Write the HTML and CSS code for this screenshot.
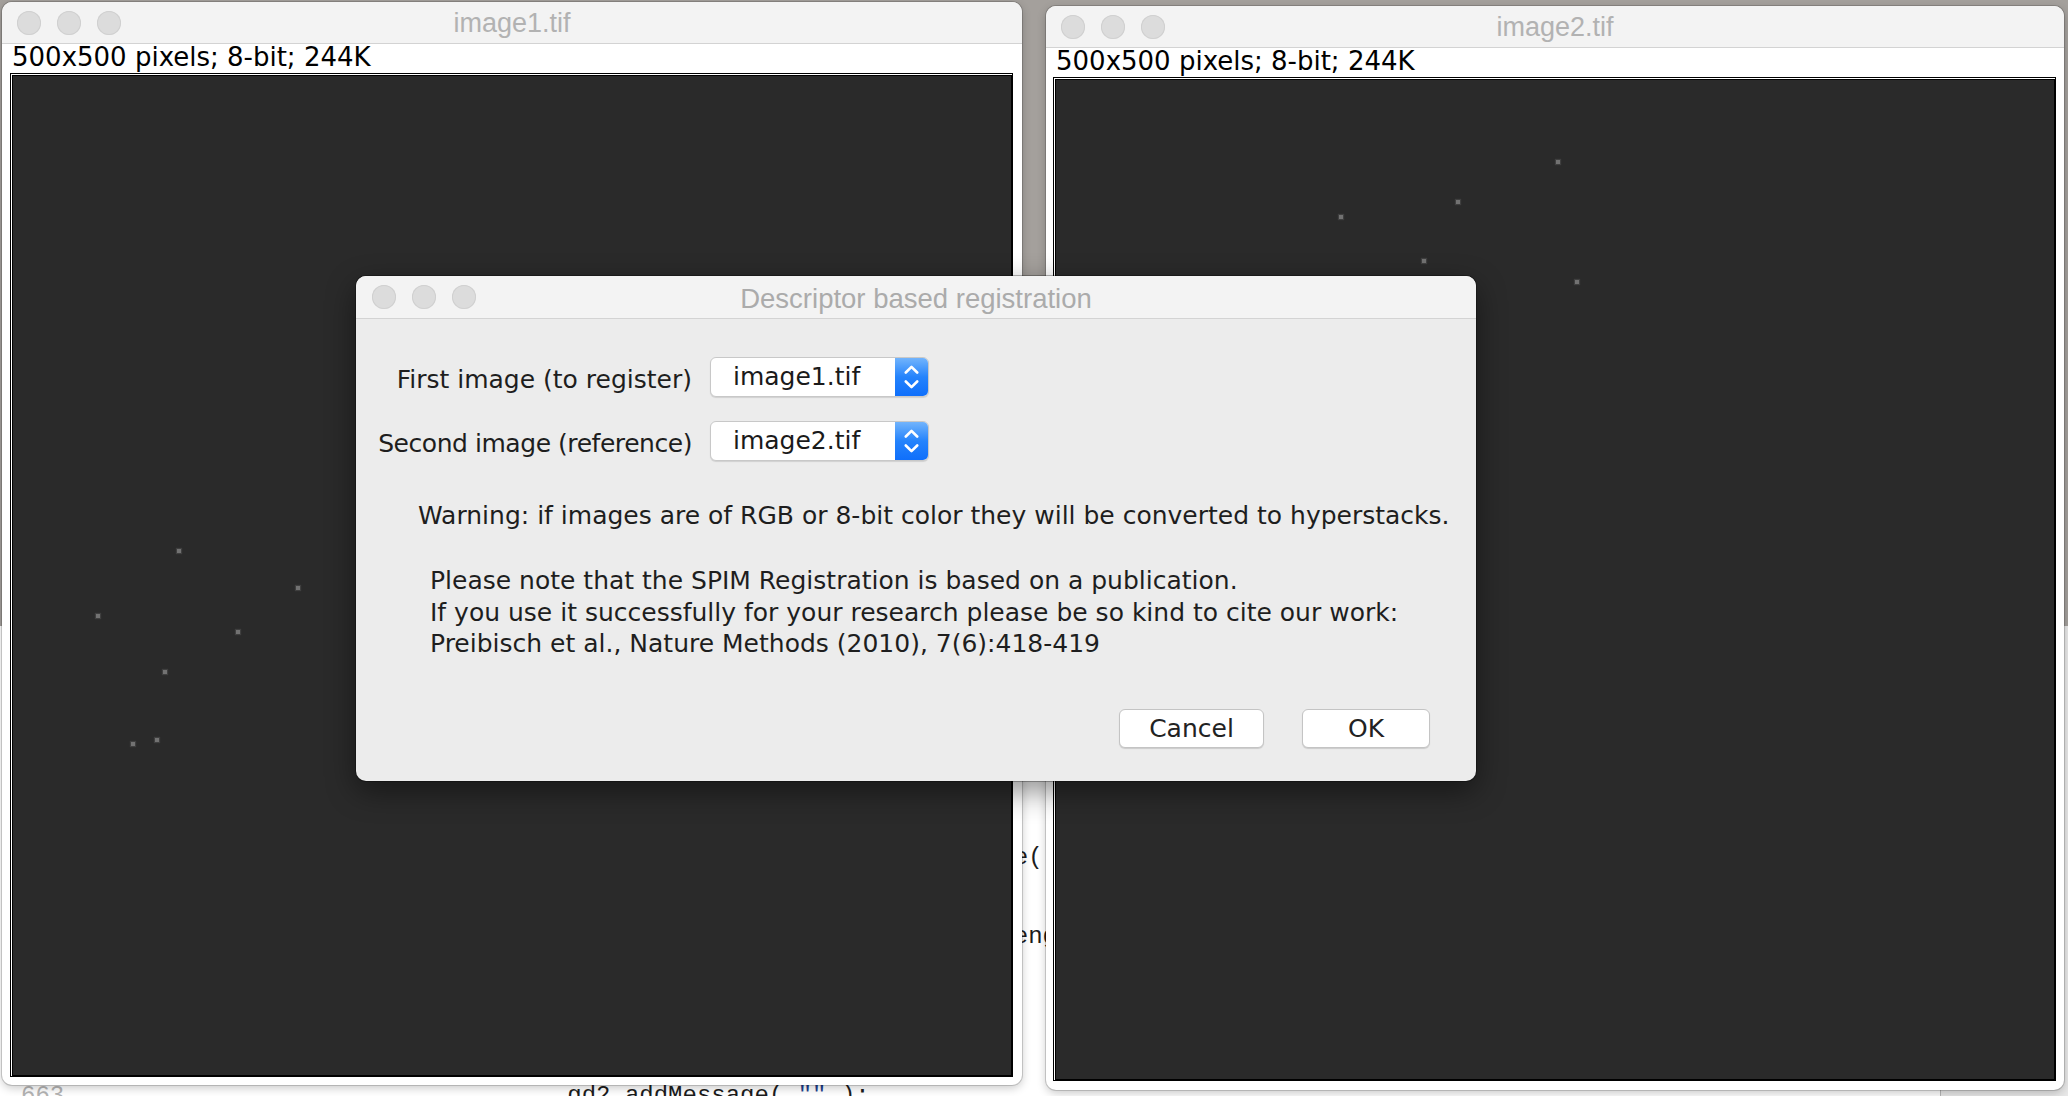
FILE: index.html
```html
<!DOCTYPE html>
<html lang="en">
<head>
<meta charset="utf-8">
<title>Descriptor based registration</title>
<link rel="stylesheet" href="styles.css">
</head>
<body>
<div class="editor">
<pre class="gutter">646
647
648
649
650
651
652
653
654
655
656
657
658
659
660
661
662
663</pre>
<pre class="code">                         final GenericDialog gd2 = new GenericDialog( "Descriptor" );

                         final String[] imgList = new String[ idList.length ];
                         for ( int i = 0; i &lt; idList.length; ++i )
                                 imgList[ i ] = getTitle( idList[ i ] );

                         // default images
                         {
                                 if ( !headless ) { gd2.addChoice( "First_image (to register)", imgList, imgList[ defaultImg1 ] ); }
                                 gd2.addChoice( "Second" );
                         }
                                 final int numImages = imgList.length;

                                 gd2.addMessage( warning );
                                 gd2.addMessage( "" );

                                 gd2.addMessage( note );
                                 gd2.addMessage( <span class="str">""</span> );</pre>
<div class="side"></div>
</div>

<section class="window win1">
  <header class="titlebar">
    <div class="lights"><span></span><span></span><span></span></div>
    <div class="title">image1.tif</div>
  </header>
  <div class="info">500x500 pixels; 8-bit; 244K</div>
  <div class="canvas">
    <i class="spot" style="left:166px;top:475px"></i>
    <i class="spot" style="left:285px;top:512px"></i>
    <i class="spot" style="left:85px;top:540px"></i>
    <i class="spot" style="left:225px;top:556px"></i>
    <i class="spot" style="left:152px;top:596px"></i>
    <i class="spot" style="left:144px;top:664px"></i>
    <i class="spot" style="left:120px;top:668px"></i>
  </div>
</section>

<section class="window win2">
  <header class="titlebar">
    <div class="lights"><span></span><span></span><span></span></div>
    <div class="title">image2.tif</div>
  </header>
  <div class="info">500x500 pixels; 8-bit; 244K</div>
  <div class="canvas">
    <i class="spot" style="left:502px;top:82px"></i>
    <i class="spot" style="left:402px;top:122px"></i>
    <i class="spot" style="left:285px;top:137px"></i>
    <i class="spot" style="left:368px;top:181px"></i>
    <i class="spot" style="left:521px;top:202px"></i>
  </div>
</section>

<section class="dialog">
  <header class="titlebar dlg-titlebar">
    <div class="lights"><span></span><span></span><span></span></div>
    <div class="title">Descriptor based registration</div>
  </header>
  <div class="dlg-body">
    <div class="form">
      <div class="label">First image (to register)</div>
      <div class="select">
        <span class="value">image1.tif</span>
        <span class="arrows"><svg class="chev" width="15" height="28" viewBox="0 0 15 28"><path d="M1.8 9.5 L7.5 3.8 L13.2 9.5 M1.8 18.5 L7.5 24.2 L13.2 18.5" fill="none" stroke="#fff" stroke-width="2.6" stroke-linecap="round" stroke-linejoin="round"/></svg></span>
      </div>
      <div class="label label-tight">Second image (reference)</div>
      <div class="select">
        <span class="value">image2.tif</span>
        <span class="arrows"><svg class="chev" width="15" height="28" viewBox="0 0 15 28"><path d="M1.8 9.5 L7.5 3.8 L13.2 9.5 M1.8 18.5 L7.5 24.2 L13.2 18.5" fill="none" stroke="#fff" stroke-width="2.6" stroke-linecap="round" stroke-linejoin="round"/></svg></span>
      </div>
    </div>
    <p class="warning">Warning: if images are of RGB or 8-bit color they will be converted to hyperstacks.</p>
    <p class="note">Please note that the SPIM Registration is based on a publication.<br>If you use it successfully for your research please be so kind to cite our work:<br>Preibisch et al., Nature Methods (2010), 7(6):418-419</p>
    <div class="buttons">
      <button class="btn btn-cancel" type="button">Cancel</button>
      <button class="btn btn-ok" type="button">OK</button>
    </div>
  </div>
</section>
</body>
</html>
```
FILE: styles.css
```css
* { box-sizing: border-box; }

html, body { margin: 0; padding: 0; }

body {
  position: relative;
  width: 2068px;
  height: 1096px;
  overflow: hidden;
  background: #a4a09c;
  font-family: "DejaVu Sans", "Noto Sans", sans-serif;
  color: #1f1f1f;
}

/* ---------- code editor behind the windows ---------- */
.editor {
  position: absolute;
  left: 0;
  right: 0;
  top: 626px;
  height: 520px;
  background: #fff;
  display: flex;
}

.gutter,
.code {
  margin: 0;
  padding-top: 6.75px;
  font-family: "Liberation Mono", "DejaVu Sans Mono", monospace;
  font-size: 24px;
  line-height: 26.5px;
  white-space: pre;
}

.gutter {
  flex: none;
  width: 92px;
  padding-left: 21px;
  color: #b4b4b4;
}

.code {
  flex: 1;
  overflow: hidden;
  color: #1c1c1c;
}

.code .str { color: #1d3f8f; }

.side {
  flex: none;
  width: 128px;
  background: #e8e8e8;
  border-left: 1px solid #b8b8b8;
}

/* ---------- windows ---------- */
.window {
  position: absolute;
  display: flex;
  flex-direction: column;
  background: #fff;
  border-radius: 10px;
  overflow: hidden;
  box-shadow: 0 0 0 1px rgba(0, 0, 0, 0.16), 0 3px 10px rgba(0, 0, 0, 0.22);
}

.win1 { left: 2px; top: 2px; width: 1020px; height: 1083px; }
.win2 { left: 1046px; top: 6px; width: 1018px; height: 1084px; }

.titlebar {
  flex: none;
  height: 42px;
  display: grid;
  grid-template-columns: 1fr auto 1fr;
  align-items: center;
  background: #f3f3f3;
  border-bottom: 1px solid #d3d3d3;
}

.lights {
  display: flex;
  gap: 16px;
  padding-left: 15px;
}

.lights span {
  width: 24px;
  height: 24px;
  border-radius: 50%;
  background: #dcdcdc;
  box-shadow: inset 0 0 0 1px #d0d0d0;
}

.title {
  font-family: "Liberation Sans", Arial, sans-serif;
  font-size: 27px;
  line-height: 39px;
  padding-top: 2px;
  color: #b2b2b2;
  white-space: nowrap;
}

.info {
  flex: none;
  height: 29px;
  padding: 1px 0 4px 10px;
  font-size: 26px;
  line-height: 24px;
  color: #000;
  white-space: nowrap;
}

.canvas {
  position: relative;
  flex: none;
  height: 1004px;
  background: #2a2a2a;
  border: 1px solid #000;
  box-shadow: inset 1px 1px 0 #fff, inset 2px 2px 0 #000, inset -1px -1px 0 #000;
}

.win1 .canvas { margin: 0 9px 0 8px; }
.win2 .canvas { margin: 0 8px 0 7px; }

.spot {
  position: absolute;
  width: 4px;
  height: 4px;
  background: #727272;
  box-shadow: 0 0 1px 1px rgba(95, 95, 95, 0.4);
}

/* ---------- dialog ---------- */
.dialog {
  position: absolute;
  left: 356px;
  top: 276px;
  width: 1120px;
  height: 505px;
  display: flex;
  flex-direction: column;
  background: #ececec;
  border-radius: 10px;
  overflow: hidden;
  box-shadow: 0 0 0 1px rgba(0, 0, 0, 0.28), 0 10px 30px rgba(0, 0, 0, 0.45);
}

.dlg-titlebar { height: 43px; }
.dlg-titlebar .lights { padding-left: 16px; }
.dlg-titlebar .title {
  color: #ababab;
  font-size: 27.5px;
  line-height: 39px;
  padding-top: 3px;
}

.dlg-body {
  display: flex;
  flex-direction: column;
  padding: 38px 46px 0 0;
  font-size: 25px;
  color: #1e1e1e;
}

.form {
  display: grid;
  grid-template-columns: 336px 219px;
  grid-auto-rows: 40px;
  column-gap: 18px;
  row-gap: 24px;
}

.label {
  text-align: right;
  line-height: 45px;
  white-space: nowrap;
}

.label-tight { letter-spacing: -0.45px; }

.select {
  display: flex;
  background: #fff;
  border: 1px solid #c8c8c8;
  border-radius: 6px;
  overflow: hidden;
  box-shadow: 0 1px 1px rgba(0, 0, 0, 0.12);
}

.select .value {
  flex: 1;
  padding-left: 22px;
  line-height: 38px;
  color: #1a1a1a;
}

.select .arrows {
  flex: none;
  width: 33px;
  display: flex;
  align-items: center;
  justify-content: center;
  background: linear-gradient(#72b4fc, #2483fc 50%, #0f6ffb);
}

.chev { display: block; }

.warning {
  margin: 39px 0 0 62px;
  line-height: 32px;
  white-space: nowrap;
}

.note {
  margin: 33px 0 0 74px;
  line-height: 31.5px;
  white-space: nowrap;
}

.buttons {
  display: flex;
  justify-content: flex-end;
  gap: 38px;
  margin-top: 49px;
}

.btn {
  height: 39px;
  padding: 0;
  border: 1px solid #c4c4c4;
  border-radius: 6px;
  background: #fff;
  box-shadow: 0 1px 1px rgba(0, 0, 0, 0.14);
  font-family: inherit;
  font-size: 25px;
  line-height: 37px;
  color: #222;
  text-align: center;
}

.btn-cancel { width: 145px; }
.btn-ok { width: 128px; }
```
